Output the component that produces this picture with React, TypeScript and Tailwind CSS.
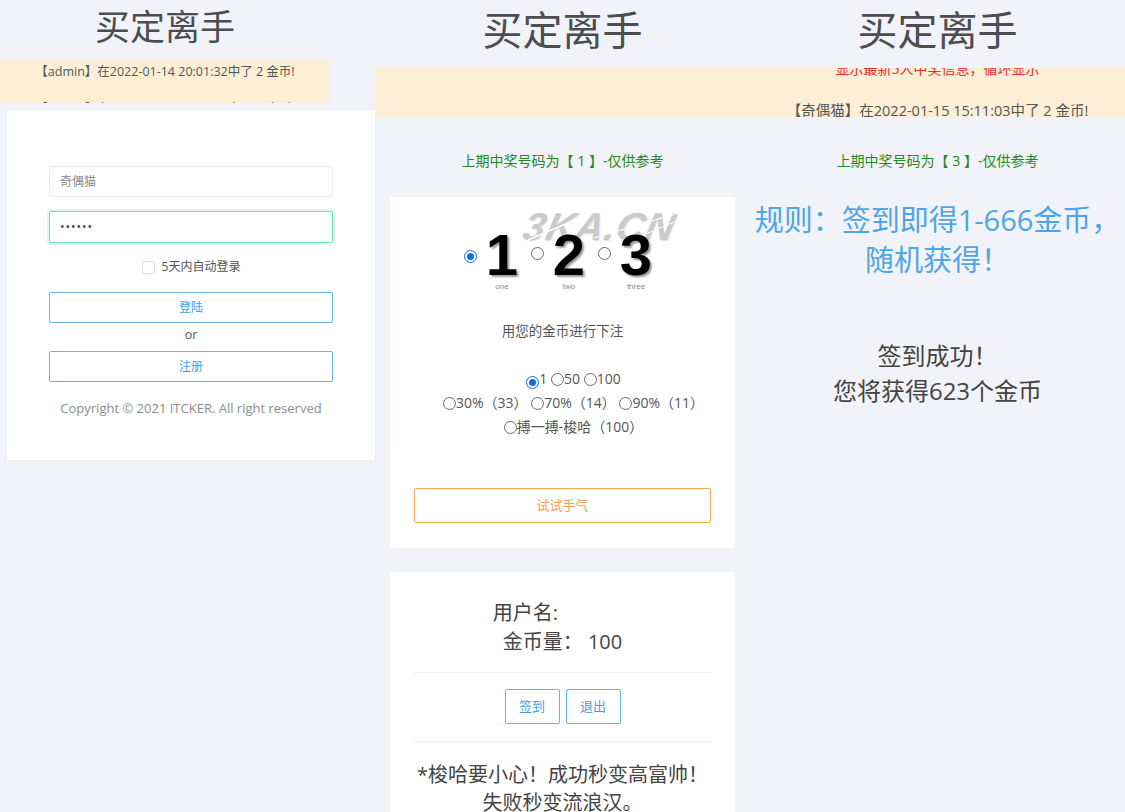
import React from 'react'

const Radio = ({checked}: { checked?: boolean }) => (
    <span
        className={`inline-flex w-[13px] h-[13px] rounded-full border items-center justify-center align-[-2px] bg-white ${checked ? "border-[#0b6fe6]" : "border-[#6b6b6b]"}`}>
        {checked && <span className="w-[7px] h-[7px] rounded-full bg-[#0b6fe6]"/>}
    </span>
)

const Title = ({small}: { small?: boolean }) => (
    <h1 className={small
        ? "h-[54px] text-center text-[35px] leading-[54px] text-[#4b4d52]"
        : "h-[60px] text-center text-[40px] leading-[60px] text-[#4b4d52]"}>
        买定离手
    </h1>
)

const LastNumber = ({num}: { num: number }) => (
    <p className="mt-[34px] text-center text-[14px] leading-[20px] text-[#218a21]">
        上期中奖号码为【 {num} 】-仅供参考
    </p>
)

const numbers = [
    {n: "1", label: "one", checked: true},
    {n: "2", label: "two"},
    {n: "3", label: "three"},
]

const App = () => {
    return (
        <div
            className="w-[1125px] h-[812px] overflow-hidden bg-[#f2f3f8] flex font-['Open_Sans','Noto_Sans_CJK_SC',sans-serif] text-[#555]">

            {/* left: login */}
            <div className="w-[375px] shrink-0">
                <div className="w-[330px]">
                    <Title small/>
                    <div className="mt-[6px] h-[43px] overflow-hidden bg-[#fdefd6] pt-[2px] text-center text-[12.5px] leading-[20px] text-[#555]">
                        <p>【admin】在2022-01-14 20:01:32中了 2 金币!</p>
                        <p className="mt-[17px]">【admin】在2022-01-14 20:01:34中了 2 金币!</p>
                    </div>
                </div>
                <div className="ml-[7px] mt-[7px] w-[368px] bg-white shadow-[0_0_4px_rgba(0,0,0,0.06)] pt-[56px] pb-[42px] flex flex-col items-center">
                    <div className="w-[284px] h-[31px] border border-[#ececec] rounded-[2px] px-[10px] flex items-center text-[12px] text-[#8a8a8a]">
                        奇偶猫
                    </div>
                    <div className="mt-[14px] w-[284px] h-[32px] border border-[#6fdcc4] rounded-[2px] shadow-[0_0_0_2px_#dff7f0] px-[10px] flex items-center text-[12px] tracking-[1px] text-[#444]">
                        ••••••
                    </div>
                    <label className="mt-[14px] h-[20px] flex items-center gap-[7px] text-[12px] text-[#555]">
                        <span className="w-[13px] h-[13px] border border-[#ddd] rounded-[2px] bg-white"/>
                        5天内自动登录
                    </label>
                    <button className="mt-[15px] w-[284px] h-[31px] border border-[#67b4e6] rounded-[2px] text-[12px] text-[#3f9de6] bg-white">
                        登陆
                    </button>
                    <p className="mt-[2px] h-[20px] leading-[20px] text-[12.5px] text-[#555]">or</p>
                    <button className="mt-[6px] w-[284px] h-[31px] border border-[#67b4e6] rounded-[2px] text-[12px] text-[#3f9de6] bg-white">
                        注册
                    </button>
                    <p className="mt-[16px] leading-[20px] text-[13px] text-[#8c8c8c]">
                        Copyright © 2021 ITCKER. All right reserved
                    </p>
                </div>
            </div>

            {/* middle: game */}
            <div className="w-[375px] shrink-0">
                <Title/>
                <div className="mt-[8px] ml-px h-[49px] bg-[#fdefd6]"/>
                <LastNumber num={1}/>

                <div className="mx-[15px] mt-[26px] bg-white pt-[33px] pb-[25px] px-[24px]">
                    <div className="relative flex justify-center gap-[8px] pr-[4px]">
                        <div className="absolute left-[110px] top-[-20px] select-none">
                            <span className="block -skew-x-12 italic font-bold text-[39px] leading-[34px] tracking-[1px] text-[#cacaca] font-['Liberation_Sans',sans-serif] [text-shadow:1px_1px_0_#e6e6e6]">
                                3KA.CN
                            </span>
                            <svg className="absolute left-0 top-0" width="160" height="34" viewBox="0 0 160 34">
                                <line x1="4" y1="30" x2="60" y2="6" stroke="#fff" strokeWidth="1.5"/>
                                <line x1="70" y1="28" x2="158" y2="2" stroke="#fff" strokeWidth="1.2"/>
                                <line x1="100" y1="33" x2="150" y2="12" stroke="#fff" strokeWidth="1"/>
                            </svg>
                        </div>
                        {numbers.map(item => (
                            <div key={item.n} className="relative z-10 flex items-start gap-[4px]">
                                <span className="mt-[10px]"><Radio checked={item.checked}/></span>
                                <div className="w-[42px] flex flex-col items-center">
                                    <span className="font-['Liberation_Sans',sans-serif] font-black text-[58px] leading-[50px] text-black [text-shadow:2px_2px_2px_#9a9a9a]">
                                        {item.n}
                                    </span>
                                    <span className="mt-[2px] text-[8px] leading-[10px] text-[#8a8a8a] font-['Liberation_Sans',sans-serif]">
                                        {item.label}
                                    </span>
                                </div>
                            </div>
                        ))}
                    </div>

                    <p className="mt-[29px] text-center text-[13.5px] leading-[20px] text-[#555]">用您的金币进行下注</p>

                    <div className="mt-[26px] pl-[22px] text-center text-[14px] leading-[24px] text-[#555]">
                        <div><Radio checked/>1 <Radio/>50 <Radio/>100</div>
                        <div><Radio/>30%（33） <Radio/>70%（14） <Radio/>90%（11）</div>
                        <div><Radio/>搏一搏-梭哈（100）</div>
                    </div>

                    <button className="mt-[49px] w-full h-[35px] border border-[#eeaa55] rounded-[2px] text-[13px] text-[#f0a24e] bg-white">
                        试试手气
                    </button>
                </div>

                <div className="mx-[15px] mt-[24px] bg-white pt-[26px] px-[24px] pb-[30px]">
                    <div className="text-center text-[20px] leading-[29px] text-[#444]">
                        <p>用户名:<span className="inline-block w-[74px]"/></p>
                        <p>金币量： 100</p>
                    </div>
                    <div className="mt-[16px] border-t border-[#eeeeee]"/>
                    <div className="mt-[16px] flex justify-center gap-[6px]">
                        <button className="w-[55px] h-[35px] border border-[#67b4e6] rounded-[2px] text-[13px] text-[#3f9de6] bg-white">签到</button>
                        <button className="w-[55px] h-[35px] border border-[#67b4e6] rounded-[2px] text-[13px] text-[#3f9de6] bg-white">退出</button>
                    </div>
                    <div className="mt-[17px] border-t border-[#eeeeee]"/>
                    <div className="mt-[19px] text-center text-[20px] leading-[28px] text-[#444]">
                        <p>*梭哈要小心！成功秒变高富帅！</p>
                        <p>失败秒变流浪汉。</p>
                    </div>
                </div>
            </div>

            {/* right: sign-in result */}
            <div className="w-[375px] shrink-0">
                <Title/>
                <div className="mt-[8px] h-[49px] overflow-hidden bg-[#fdefd6] text-center">
                    <p className="-mt-[9px] text-[14px] leading-[20px] text-[#e02d2d]">显示最新5人中奖信息，循环显示</p>
                    <p className="mt-[22px] text-[14.5px] leading-[20px] text-[#555]">【奇偶猫】在2022-01-15 15:11:03中了 2 金币!</p>
                </div>
                <LastNumber num={3}/>
                <p className="mt-[29px] whitespace-nowrap text-center text-[29px] leading-[40px] text-[#4ea6e6]">
                    规则：签到即得1-666金币，<br/>随机获得！
                </p>
                <div className="mt-[58px] text-center text-[24px] leading-[35px] text-[#444]">
                    <p>签到成功！</p>
                    <p>您将获得623个金币</p>
                </div>
            </div>
        </div>
    )
}

export default App
